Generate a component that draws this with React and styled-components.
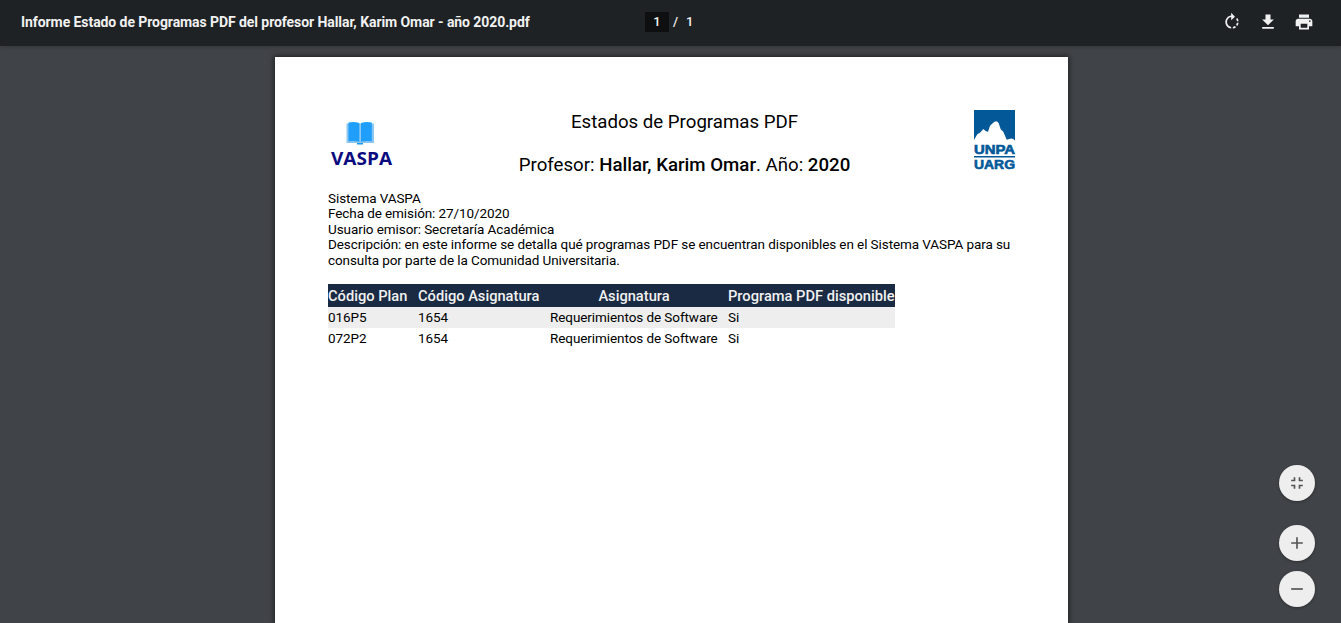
import React from 'react';
import styled, { createGlobalStyle } from 'styled-components';
import { MdRotateRight, MdFileDownload, MdPrint, MdFullscreenExit, MdAdd, MdRemove } from 'react-icons/md';

const GlobalStyle = createGlobalStyle`
  * { box-sizing: border-box; }
  body { margin: 0; background: #404347; font-family: Roboto, "Liberation Sans", sans-serif; overflow: hidden; }
`;

const Viewer = styled.div`
  position: relative;
  display: flex;
  flex-direction: column;
  height: 623px;
  overflow: hidden;
  background: #404347;
`;

const Toolbar = styled.header`
  display: grid;
  grid-template-columns: 645px 1fr auto;
  align-items: center;
  flex: none;
  height: 46px;
  padding: 0 27px 3px 0;
  background: #1e2225;
  color: #f1f1f1;
  box-shadow: 0 1px 4px rgba(0, 0, 0, 0.2);
  z-index: 1;
`;

const FileName = styled.h1`
  margin: 0;
  padding-left: 21px;
  font-size: 14px;
  font-weight: 700;
  line-height: 20px;
  letter-spacing: -0.075px;
  white-space: nowrap;
`;

const PageSelector = styled.div`
  display: flex;
  align-items: center;
  font-size: 13px;
  font-weight: 500;
  line-height: 20px;
`;

const CurrentPage = styled.span`
  width: 24px;
  height: 20px;
  margin-right: 4px;
  background: #0d0f10;
  text-align: center;
`;

const PageCount = styled.span`
  margin-left: 8px;
`;

const Actions = styled.div`
  display: flex;
  gap: 16px;
`;

const ToolButton = styled.button`
  display: flex;
  padding: 0;
  border: 0;
  background: none;
  color: #f1f1f1;
  font-size: 20px;
`;

const Page = styled.main`
  flex: 1;
  width: 793px;
  margin: 11px 0 0 275px;
  padding: 53px 53px 0;
  background: #fff;
  color: #000;
  box-shadow: 0 0 5px 1px rgba(0, 0, 0, 0.55);
`;

const PageHeader = styled.div`
  display: flex;
  align-items: flex-start;
  height: 80.5px;
`;

const Titles = styled.div`
  display: flex;
  flex-direction: column;
  gap: 19px;
  width: 340px;
  margin: 0 auto 0 120.5px;
  text-align: center;
  font-size: 18.67px;
  line-height: 24px;
  white-space: nowrap;

  strong { font-weight: 500; }
`;

const VaspaLogo = styled.svg`
  flex: none;
  width: 66px;
  height: 50px;
  margin-top: 9px;
  overflow: visible;
`;

const UnpaLogo = styled.svg`
  flex: none;
  width: 41px;
  height: 60px;
  overflow: visible;
`;

const Details = styled.div`
  font-size: 13.5px;
  line-height: 15.5px;
  letter-spacing: -0.085px;
  white-space: nowrap;
`;

const Table = styled.table`
  width: 567px;
  margin-top: 16px;
  border-collapse: collapse;
  table-layout: fixed;
  font-size: 13.5px;
  letter-spacing: -0.08px;
`;

const HeadCell = styled.th`
  width: ${(p) => p.$width}px;
  height: 23px;
  padding: 0 ${(p) => p.$gutter || 0}px 0 0;
  background: #1a2a43;
  color: #f1f1f1;
  font-size: 14.67px;
  font-weight: 500;
  letter-spacing: 0;
  line-height: 20px;
  text-align: ${(p) => p.$align || 'left'};
  white-space: nowrap;
`;

const Row = styled.tr`
  background: ${(p) => (p.$shaded ? '#eee' : '#fff')};
`;

const Cell = styled.td`
  height: 21px;
  padding: 0;
  line-height: 20px;
  vertical-align: top;
  white-space: nowrap;
`;

const ZoomControls = styled.div`
  position: absolute;
  top: 465px;
  right: 26px;
  display: flex;
  flex-direction: column;
  gap: 10px;
`;

const ZoomButton = styled.button`
  display: flex;
  align-items: center;
  justify-content: center;
  width: 36px;
  height: 36px;
  margin-bottom: ${(p) => (p.$separated ? '14px' : 0)};
  padding: 0;
  border: 0;
  border-radius: 50%;
  background: #eee;
  color: #555;
  font-size: 20px;
  box-shadow: 0 1px 3px rgba(0, 0, 0, 0.3);
`;

const rows = [
  ['016P5', '1654', 'Requerimientos de Software', 'Si'],
  ['072P2', '1654', 'Requerimientos de Software', 'Si'],
];

function Vaspa() {
  return (
    <VaspaLogo viewBox="0 0 66 50">
      <path d="M18.5 4.500h27.500v19.500H35q-3 1.500-6 0H18.500z" fill="#8dc6f0" />
      <path d="M20.500 3.500q6-1 10.800.5v18.700q-5-1-10.800-.5zM43.800 3.500q-6-1-10.800.5v18.700q5-1 10.800-.5z" fill="#1f9ffb" />
      <path d="M29 24h6v1.500h-6z" fill="#179bfb" />
      <text x="3" y="46" textLength="61" lengthAdjust="spacingAndGlyphs" fontFamily="Open Sans, sans-serif" fontWeight="700" fontSize="18.5" fill="#0b0b80">VASPA</text>
    </VaspaLogo>
  );
}

function Unpa() {
  return (
    <UnpaLogo viewBox="0 0 41 60">
      <path d="M0 0h41v30.500Q39 28 36 28.700L32.700 29.700 29.300 21.700 26.700 19.300 24.700 13.300Q23.500 11.300 22 11.300L20 12 16 15.700 14 21.700 12 21.300 9.300 19 6 22.700 3.300 24.300 0 30z" fill="#035898" />
      <text x="0" y="43.5" textLength="41" lengthAdjust="spacingAndGlyphs" fontFamily="Liberation Sans, sans-serif" fontWeight="700" fontSize="12.5" fill="#035898" stroke="#035898" strokeWidth="0.6">UNPA</text>
      <path d="M0 46h41v1.500H0z" fill="#035898" />
      <text x="0" y="58.500" textLength="41" lengthAdjust="spacingAndGlyphs" fontFamily="Liberation Sans, sans-serif" fontWeight="700" fontSize="12.5" fill="#035898" stroke="#035898" strokeWidth="0.6">UARG</text>
    </UnpaLogo>
  );
}

export default function App() {
  return (
    <>
      <GlobalStyle />
      <Viewer>
        <Toolbar>
          <FileName>Informe Estado de Programas PDF del profesor Hallar, Karim Omar - año 2020.pdf</FileName>
          <PageSelector>
            <CurrentPage>1</CurrentPage>/<PageCount>1</PageCount>
          </PageSelector>
          <Actions>
            <ToolButton aria-label="Girar"><MdRotateRight /></ToolButton>
            <ToolButton aria-label="Descargar"><MdFileDownload /></ToolButton>
            <ToolButton aria-label="Imprimir"><MdPrint /></ToolButton>
          </Actions>
        </Toolbar>
        <Page>
          <PageHeader>
            <Vaspa />
            <Titles>
              <div>Estados de Programas PDF</div>
              <div>Profesor: <strong>Hallar, Karim Omar</strong>. Año: <strong>2020</strong></div>
            </Titles>
            <Unpa />
          </PageHeader>
          <Details>
            Sistema VASPA<br />
            Fecha de emisión: 27/10/2020<br />
            Usuario emisor: Secretaría Académica<br />
            Descripción: en este informe se detalla qué programas PDF se encuentran disponibles en el Sistema VASPA para su<br />
            consulta por parte de la Comunidad Universitaria.
          </Details>
          <Table>
            <thead>
              <tr>
                <HeadCell $width={90}>Código Plan</HeadCell>
                <HeadCell $width={132}>Código Asignatura</HeadCell>
                <HeadCell $width={178} $gutter={10} $align="center">Asignatura</HeadCell>
                <HeadCell $width={167}>Programa PDF disponible</HeadCell>
              </tr>
            </thead>
            <tbody>
              {rows.map((row, i) => (
                <Row key={row[0]} $shaded={i % 2 === 0}>
                  {row.map((value, c) => <Cell key={c}>{value}</Cell>)}
                </Row>
              ))}
            </tbody>
          </Table>
        </Page>
        <ZoomControls>
          <ZoomButton $separated aria-label="Ajustar"><MdFullscreenExit /></ZoomButton>
          <ZoomButton aria-label="Acercar"><MdAdd /></ZoomButton>
          <ZoomButton aria-label="Alejar"><MdRemove /></ZoomButton>
        </ZoomControls>
      </Viewer>
    </>
  );
}
